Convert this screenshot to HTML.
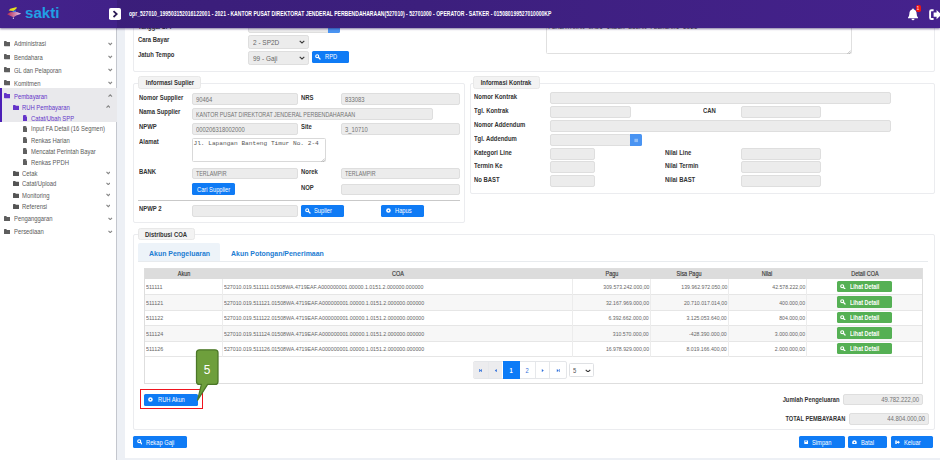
<!DOCTYPE html>
<html><head><meta charset="utf-8"><title>SAKTI</title>
<style>html,body{margin:0;padding:0;background:#edf0f5;overflow:hidden;}body{width:940px;height:460px;position:relative;overflow:hidden;font-family:"Liberation Sans",sans-serif;}</style></head>
<body>
<div style="position:absolute;left:0px;top:0px;width:940px;height:460px;background:#edf0f5;"></div>
<div style="position:absolute;left:124.8px;top:27px;width:815.2px;height:431.2px;background:#fff;"></div>
<div style="position:absolute;left:0px;top:27px;width:117.3px;height:433px;background:#fff;border-right:0.6px solid #c4c7ce;box-sizing:border-box;"></div>
<div style="position:absolute;left:0px;top:87.9px;width:117px;height:34.6px;background:#e9e9ec;"></div>
<div style="position:absolute;left:0px;top:87.9px;width:1.9px;height:34.6px;background:#4c1fb6;"></div>
<svg style="position:absolute;left:4.2px;top:41.35px;" width="6.3" height="5.29" viewBox="0 0 10 7.2" preserveAspectRatio="none"><path d="M0 1Q0 0 1 0H3.6L4.6 1.2H9Q10 1.2 10 2.2V6.2Q10 7.2 9 7.2H1Q0 7.2 0 6.2Z" fill="#5e5e5e"/></svg>
<div style="position:absolute;top:41.48px;font:normal 6.8px/1 'Liberation Sans',sans-serif;color:#5a5a5a;white-space:nowrap;left:13.5px;transform:scaleX(0.865);transform-origin:0 50%;">Administrasi</div>
<svg style="position:absolute;left:108px;top:42.25px;" width="4.5" height="3.5" viewBox="0 0 4.5 3.5" preserveAspectRatio="none"><path d="M0.5 0.9L2.25 2.6L4 0.9" fill="none" stroke="#858585" stroke-width="1.15"/></svg>
<svg style="position:absolute;left:4.2px;top:54.45px;" width="6.3" height="5.29" viewBox="0 0 10 7.2" preserveAspectRatio="none"><path d="M0 1Q0 0 1 0H3.6L4.6 1.2H9Q10 1.2 10 2.2V6.2Q10 7.2 9 7.2H1Q0 7.2 0 6.2Z" fill="#5e5e5e"/></svg>
<div style="position:absolute;top:54.58px;font:normal 6.8px/1 'Liberation Sans',sans-serif;color:#5a5a5a;white-space:nowrap;left:13.5px;transform:scaleX(0.865);transform-origin:0 50%;">Bendahara</div>
<svg style="position:absolute;left:108px;top:55.35px;" width="4.5" height="3.5" viewBox="0 0 4.5 3.5" preserveAspectRatio="none"><path d="M0.5 0.9L2.25 2.6L4 0.9" fill="none" stroke="#858585" stroke-width="1.15"/></svg>
<svg style="position:absolute;left:4.2px;top:67.45px;" width="6.3" height="5.29" viewBox="0 0 10 7.2" preserveAspectRatio="none"><path d="M0 1Q0 0 1 0H3.6L4.6 1.2H9Q10 1.2 10 2.2V6.2Q10 7.2 9 7.2H1Q0 7.2 0 6.2Z" fill="#5e5e5e"/></svg>
<div style="position:absolute;top:67.58px;font:normal 6.8px/1 'Liberation Sans',sans-serif;color:#5a5a5a;white-space:nowrap;left:13.5px;transform:scaleX(0.865);transform-origin:0 50%;">GL dan Pelaporan</div>
<svg style="position:absolute;left:108px;top:68.35px;" width="4.5" height="3.5" viewBox="0 0 4.5 3.5" preserveAspectRatio="none"><path d="M0.5 0.9L2.25 2.6L4 0.9" fill="none" stroke="#858585" stroke-width="1.15"/></svg>
<svg style="position:absolute;left:4.2px;top:80.45px;" width="6.3" height="5.29" viewBox="0 0 10 7.2" preserveAspectRatio="none"><path d="M0 1Q0 0 1 0H3.6L4.6 1.2H9Q10 1.2 10 2.2V6.2Q10 7.2 9 7.2H1Q0 7.2 0 6.2Z" fill="#5e5e5e"/></svg>
<div style="position:absolute;top:80.58px;font:normal 6.8px/1 'Liberation Sans',sans-serif;color:#5a5a5a;white-space:nowrap;left:13.5px;transform:scaleX(0.865);transform-origin:0 50%;">Komitmen</div>
<svg style="position:absolute;left:108px;top:81.35px;" width="4.5" height="3.5" viewBox="0 0 4.5 3.5" preserveAspectRatio="none"><path d="M0.5 0.9L2.25 2.6L4 0.9" fill="none" stroke="#858585" stroke-width="1.15"/></svg>
<svg style="position:absolute;left:4.2px;top:93.45px;" width="6.3" height="5.29" viewBox="0 0 10 7.2" preserveAspectRatio="none"><path d="M0 1Q0 0 1 0H3.6L4.6 1.2H9Q10 1.2 10 2.2V6.2Q10 7.2 9 7.2H1Q0 7.2 0 6.2Z" fill="#6434c9"/></svg>
<div style="position:absolute;top:93.58px;font:normal 6.8px/1 'Liberation Sans',sans-serif;color:#6434c9;white-space:nowrap;left:13.5px;transform:scaleX(0.865);transform-origin:0 50%;">Pembayaran</div>
<svg style="position:absolute;left:108px;top:94.35px;" width="4.5" height="3.5" viewBox="0 0 4.5 3.5" preserveAspectRatio="none"><path d="M0.5 2.6L2.25 0.9L4 2.6" fill="none" stroke="#858585" stroke-width="1.15"/></svg>
<svg style="position:absolute;left:13px;top:104.5px;" width="6.2" height="5.21" viewBox="0 0 10 7.2" preserveAspectRatio="none"><path d="M0 1Q0 0 1 0H3.6L4.6 1.2H9Q10 1.2 10 2.2V6.2Q10 7.2 9 7.2H1Q0 7.2 0 6.2Z" fill="#6434c9"/></svg>
<div style="position:absolute;top:104.58px;font:normal 6.8px/1 'Liberation Sans',sans-serif;color:#6434c9;white-space:nowrap;left:22px;transform:scaleX(0.865);transform-origin:0 50%;">RUH Pembayaran</div>
<svg style="position:absolute;left:105.5px;top:105.35px;" width="4.5" height="3.5" viewBox="0 0 4.5 3.5" preserveAspectRatio="none"><path d="M0.5 2.6L2.25 0.9L4 2.6" fill="none" stroke="#858585" stroke-width="1.15"/></svg>
<svg style="position:absolute;left:22.6px;top:114.8px;" width="4.6" height="6.2" viewBox="0 0 3.9 5.2" preserveAspectRatio="none"><path d="M0 0.4Q0 0 0.4 0H2.4L3.9 1.5V4.8Q3.9 5.2 3.5 5.2H0.4Q0 5.2 0 4.8Z" fill="#6434c9"/><path d="M2.4 0V1.5H3.9" fill="#fff" opacity=".5"/></svg>
<div style="position:absolute;top:115.58px;font:normal 6.8px/1 'Liberation Sans',sans-serif;color:#6434c9;white-space:nowrap;left:31px;transform:scaleX(0.865);transform-origin:0 50%;">Catat/Ubah SPP</div>
<svg style="position:absolute;left:22.6px;top:125.7px;" width="4.6" height="6.2" viewBox="0 0 3.9 5.2" preserveAspectRatio="none"><path d="M0 0.4Q0 0 0.4 0H2.4L3.9 1.5V4.8Q3.9 5.2 3.5 5.2H0.4Q0 5.2 0 4.8Z" fill="#606060"/><path d="M2.4 0V1.5H3.9" fill="#fff" opacity=".5"/></svg>
<div style="position:absolute;top:126.18px;font:normal 6.8px/1 'Liberation Sans',sans-serif;color:#5a5a5a;white-space:nowrap;left:31px;transform:scaleX(0.865);transform-origin:0 50%;">Input FA Detail (16 Segmen)</div>
<svg style="position:absolute;left:22.6px;top:137.1px;" width="4.6" height="6.2" viewBox="0 0 3.9 5.2" preserveAspectRatio="none"><path d="M0 0.4Q0 0 0.4 0H2.4L3.9 1.5V4.8Q3.9 5.2 3.5 5.2H0.4Q0 5.2 0 4.8Z" fill="#606060"/><path d="M2.4 0V1.5H3.9" fill="#fff" opacity=".5"/></svg>
<div style="position:absolute;top:137.58px;font:normal 6.8px/1 'Liberation Sans',sans-serif;color:#5a5a5a;white-space:nowrap;left:31px;transform:scaleX(0.865);transform-origin:0 50%;">Renkas Harian</div>
<svg style="position:absolute;left:22.6px;top:148.1px;" width="4.6" height="6.2" viewBox="0 0 3.9 5.2" preserveAspectRatio="none"><path d="M0 0.4Q0 0 0.4 0H2.4L3.9 1.5V4.8Q3.9 5.2 3.5 5.2H0.4Q0 5.2 0 4.8Z" fill="#606060"/><path d="M2.4 0V1.5H3.9" fill="#fff" opacity=".5"/></svg>
<div style="position:absolute;top:148.58px;font:normal 6.8px/1 'Liberation Sans',sans-serif;color:#5a5a5a;white-space:nowrap;left:31px;transform:scaleX(0.865);transform-origin:0 50%;">Mencatat Perintah Bayar</div>
<svg style="position:absolute;left:22.6px;top:159.1px;" width="4.6" height="6.2" viewBox="0 0 3.9 5.2" preserveAspectRatio="none"><path d="M0 0.4Q0 0 0.4 0H2.4L3.9 1.5V4.8Q3.9 5.2 3.5 5.2H0.4Q0 5.2 0 4.8Z" fill="#606060"/><path d="M2.4 0V1.5H3.9" fill="#fff" opacity=".5"/></svg>
<div style="position:absolute;top:159.58px;font:normal 6.8px/1 'Liberation Sans',sans-serif;color:#5a5a5a;white-space:nowrap;left:31px;transform:scaleX(0.865);transform-origin:0 50%;">Renkas PPDH</div>
<svg style="position:absolute;left:13px;top:170.5px;" width="6.2" height="5.21" viewBox="0 0 10 7.2" preserveAspectRatio="none"><path d="M0 1Q0 0 1 0H3.6L4.6 1.2H9Q10 1.2 10 2.2V6.2Q10 7.2 9 7.2H1Q0 7.2 0 6.2Z" fill="#555"/></svg>
<div style="position:absolute;top:170.58px;font:normal 6.8px/1 'Liberation Sans',sans-serif;color:#5a5a5a;white-space:nowrap;left:22px;transform:scaleX(0.865);transform-origin:0 50%;">Cetak</div>
<svg style="position:absolute;left:105.5px;top:171.35px;" width="4.5" height="3.5" viewBox="0 0 4.5 3.5" preserveAspectRatio="none"><path d="M0.5 0.9L2.25 2.6L4 0.9" fill="none" stroke="#858585" stroke-width="1.15"/></svg>
<svg style="position:absolute;left:13px;top:181.1px;" width="6.2" height="5.21" viewBox="0 0 10 7.2" preserveAspectRatio="none"><path d="M0 1Q0 0 1 0H3.6L4.6 1.2H9Q10 1.2 10 2.2V6.2Q10 7.2 9 7.2H1Q0 7.2 0 6.2Z" fill="#555"/></svg>
<div style="position:absolute;top:181.18px;font:normal 6.8px/1 'Liberation Sans',sans-serif;color:#5a5a5a;white-space:nowrap;left:22px;transform:scaleX(0.865);transform-origin:0 50%;">Catat/Upload</div>
<svg style="position:absolute;left:105.5px;top:181.95px;" width="4.5" height="3.5" viewBox="0 0 4.5 3.5" preserveAspectRatio="none"><path d="M0.5 0.9L2.25 2.6L4 0.9" fill="none" stroke="#858585" stroke-width="1.15"/></svg>
<svg style="position:absolute;left:13px;top:192.5px;" width="6.2" height="5.21" viewBox="0 0 10 7.2" preserveAspectRatio="none"><path d="M0 1Q0 0 1 0H3.6L4.6 1.2H9Q10 1.2 10 2.2V6.2Q10 7.2 9 7.2H1Q0 7.2 0 6.2Z" fill="#555"/></svg>
<div style="position:absolute;top:192.58px;font:normal 6.8px/1 'Liberation Sans',sans-serif;color:#5a5a5a;white-space:nowrap;left:22px;transform:scaleX(0.865);transform-origin:0 50%;">Monitoring</div>
<svg style="position:absolute;left:105.5px;top:193.35px;" width="4.5" height="3.5" viewBox="0 0 4.5 3.5" preserveAspectRatio="none"><path d="M0.5 0.9L2.25 2.6L4 0.9" fill="none" stroke="#858585" stroke-width="1.15"/></svg>
<svg style="position:absolute;left:13px;top:203.5px;" width="6.2" height="5.21" viewBox="0 0 10 7.2" preserveAspectRatio="none"><path d="M0 1Q0 0 1 0H3.6L4.6 1.2H9Q10 1.2 10 2.2V6.2Q10 7.2 9 7.2H1Q0 7.2 0 6.2Z" fill="#555"/></svg>
<div style="position:absolute;top:203.58px;font:normal 6.8px/1 'Liberation Sans',sans-serif;color:#5a5a5a;white-space:nowrap;left:22px;transform:scaleX(0.865);transform-origin:0 50%;">Referensi</div>
<svg style="position:absolute;left:105.5px;top:204.35px;" width="4.5" height="3.5" viewBox="0 0 4.5 3.5" preserveAspectRatio="none"><path d="M0.5 0.9L2.25 2.6L4 0.9" fill="none" stroke="#858585" stroke-width="1.15"/></svg>
<svg style="position:absolute;left:4.2px;top:216.05px;" width="6.3" height="5.29" viewBox="0 0 10 7.2" preserveAspectRatio="none"><path d="M0 1Q0 0 1 0H3.6L4.6 1.2H9Q10 1.2 10 2.2V6.2Q10 7.2 9 7.2H1Q0 7.2 0 6.2Z" fill="#5e5e5e"/></svg>
<div style="position:absolute;top:216.18px;font:normal 6.8px/1 'Liberation Sans',sans-serif;color:#5a5a5a;white-space:nowrap;left:13.5px;transform:scaleX(0.865);transform-origin:0 50%;">Penganggaran</div>
<svg style="position:absolute;left:108px;top:216.95px;" width="4.5" height="3.5" viewBox="0 0 4.5 3.5" preserveAspectRatio="none"><path d="M0.5 0.9L2.25 2.6L4 0.9" fill="none" stroke="#858585" stroke-width="1.15"/></svg>
<svg style="position:absolute;left:4.2px;top:229.05px;" width="6.3" height="5.29" viewBox="0 0 10 7.2" preserveAspectRatio="none"><path d="M0 1Q0 0 1 0H3.6L4.6 1.2H9Q10 1.2 10 2.2V6.2Q10 7.2 9 7.2H1Q0 7.2 0 6.2Z" fill="#5e5e5e"/></svg>
<div style="position:absolute;top:229.18px;font:normal 6.8px/1 'Liberation Sans',sans-serif;color:#5a5a5a;white-space:nowrap;left:13.5px;transform:scaleX(0.865);transform-origin:0 50%;">Persediaan</div>
<svg style="position:absolute;left:108px;top:229.95px;" width="4.5" height="3.5" viewBox="0 0 4.5 3.5" preserveAspectRatio="none"><path d="M0.5 0.9L2.25 2.6L4 0.9" fill="none" stroke="#858585" stroke-width="1.15"/></svg>
<div style="position:absolute;left:133px;top:20px;width:801.5px;height:52.2px;border:1px solid #ebecef;border-radius:2px;box-sizing:border-box;"></div>
<div style="position:absolute;top:23.53px;font:bold 6.8px/1 'Liberation Sans',sans-serif;color:#333;white-space:nowrap;left:138px;transform:scaleX(0.87);transform-origin:0 50%;">Tanggal SPP</div>
<div style="position:absolute;left:248.4px;top:20px;width:80.6px;height:13.2px;background:#ececec;border:1px solid #dedede;border-radius:2.1px;box-sizing:border-box;"></div>
<div style="position:absolute;left:328.3px;top:20px;width:11.7px;height:12.8px;background:#4a94f2;border-radius:0 1.5px 1.5px 0;"></div>
<div style="position:absolute;top:36.93px;font:bold 6.8px/1 'Liberation Sans',sans-serif;color:#333;white-space:nowrap;left:138px;transform:scaleX(0.87);transform-origin:0 50%;">Cara Bayar</div>
<div style="position:absolute;top:52.43px;font:bold 6.8px/1 'Liberation Sans',sans-serif;color:#333;white-space:nowrap;left:138px;transform:scaleX(0.87);transform-origin:0 50%;">Jatuh Tempo</div>
<div style="position:absolute;left:248.4px;top:35.2px;width:60.6px;height:13.7px;background:#ececec;border:1px solid #dedede;border-radius:2.2px;box-sizing:border-box;"></div>
<div style="position:absolute;top:39.2px;font:normal 7.6px/1 'Liberation Sans',sans-serif;color:#666;white-space:nowrap;left:252.5px;transform:scaleX(0.853);transform-origin:0 50%;">2 - SP2D</div>
<svg style="position:absolute;left:299px;top:40.4px;" width="6" height="3.8" viewBox="0 0 6 3.8" preserveAspectRatio="none"><path d="M0.7 0.8L3 3L5.3 0.8" fill="none" stroke="#3a3a3a" stroke-width="1.1"/></svg>
<div style="position:absolute;left:248.4px;top:50.9px;width:60.6px;height:14.0px;background:#ececec;border:1px solid #dedede;border-radius:2.2px;box-sizing:border-box;"></div>
<div style="position:absolute;top:55.2px;font:normal 7.6px/1 'Liberation Sans',sans-serif;color:#666;white-space:nowrap;left:252.5px;transform:scaleX(0.853);transform-origin:0 50%;">99 - Gaji</div>
<svg style="position:absolute;left:299px;top:56.4px;" width="6" height="3.8" viewBox="0 0 6 3.8" preserveAspectRatio="none"><path d="M0.7 0.8L3 3L5.3 0.8" fill="none" stroke="#3a3a3a" stroke-width="1.1"/></svg>
<div style="position:absolute;left:311.5px;top:50.8px;width:37.5px;height:12.1px;background:#0f7bf5;border-radius:1.5px;"></div>
<div style="position:absolute;top:54.49px;font:normal 6.6px/1 'Liberation Sans',sans-serif;color:#fff;white-space:nowrap;left:324.8px;transform:scaleX(0.87);transform-origin:0 50%;">RPD</div>
<svg style="position:absolute;left:315.3px;top:54.099999999999994px;" width="5.5" height="5.5" viewBox="0 0 5 5" preserveAspectRatio="none"><circle cx="2" cy="2" r="1.35" fill="none" stroke="#fff" stroke-width="1.05"/><path d="M3 3L4.6 4.6" stroke="#fff" stroke-width="1.15" stroke-linecap="round"/></svg>
<div style="position:absolute;top:23.23px;font:bold 6.8px/1 'Liberation Sans',sans-serif;color:#333;white-space:nowrap;left:507px;transform:scaleX(0.87);transform-origin:0 50%;">Uraian</div>
<div style="position:absolute;left:546px;top:20px;width:305.5px;height:34px;background:#fff;border:1px solid #e0e0e0;border-radius:1.5px;box-sizing:border-box;"></div>
<div style="position:absolute;top:25.42px;font:normal 6.07px/1 'Liberation Mono',sans-serif;color:#444;white-space:nowrap;left:548.3px;transform:scaleX(1);transform-origin:0 50%;">PEMBAYARAN GAJI INDUK BULAN FEBRUARI 2021</div>
<svg style="position:absolute;left:847px;top:49.5px;" width="4" height="4" viewBox="0 0 4 4" preserveAspectRatio="none"><path d="M0.5 3.8L3.8 0.5M2.2 3.8L3.8 2.2" stroke="#888" stroke-width="0.5"/></svg>
<div style="position:absolute;left:133px;top:82.5px;width:331.5px;height:140.5px;border:1px solid #ebecef;border-radius:2px;box-sizing:border-box;"></div>
<div style="position:absolute;left:137.7px;top:76.3px;width:63.6px;height:12.9px;background:#f3f3f3;border:1px solid #e8e8e8;border-radius:2.5px;box-sizing:border-box;"></div>
<div style="position:absolute;top:80.48px;font:bold 6.8px/1 'Liberation Sans',sans-serif;color:#333;white-space:nowrap;left:169.5px;transform:translateX(-50%) scaleX(0.87);transform-origin:50% 50%;">Informasi Suplier</div>
<div style="position:absolute;top:95.23px;font:bold 6.8px/1 'Liberation Sans',sans-serif;color:#333;white-space:nowrap;left:138.5px;transform:scaleX(0.87);transform-origin:0 50%;">Nomor Supplier</div>
<div style="position:absolute;left:192px;top:93.4px;width:105.5px;height:11.6px;background:#ececec;border:1px solid #dedede;border-radius:2.1px;box-sizing:border-box;"></div>
<div style="position:absolute;top:96.99px;font:normal 6.5px/1 'Liberation Sans',sans-serif;color:#737373;white-space:nowrap;left:196.3px;transform:scaleX(0.9);transform-origin:0 50%;">90464</div>
<div style="position:absolute;top:94.93px;font:bold 6.8px/1 'Liberation Sans',sans-serif;color:#333;white-space:nowrap;left:300.5px;transform:scaleX(0.87);transform-origin:0 50%;">NRS</div>
<div style="position:absolute;left:341px;top:93.4px;width:118.5px;height:11.6px;background:#ececec;border:1px solid #dedede;border-radius:2.1px;box-sizing:border-box;"></div>
<div style="position:absolute;top:96.99px;font:normal 6.5px/1 'Liberation Sans',sans-serif;color:#737373;white-space:nowrap;left:345.3px;transform:scaleX(0.9);transform-origin:0 50%;">833083</div>
<div style="position:absolute;top:109.43px;font:bold 6.8px/1 'Liberation Sans',sans-serif;color:#333;white-space:nowrap;left:138.5px;transform:scaleX(0.87);transform-origin:0 50%;">Nama Supplier</div>
<div style="position:absolute;left:192px;top:108px;width:240.5px;height:11.7px;background:#ececec;border:1px solid #dedede;border-radius:2.1px;box-sizing:border-box;"></div>
<div style="position:absolute;top:111.64px;font:normal 6.5px/1 'Liberation Sans',sans-serif;color:#737373;white-space:nowrap;left:196.3px;transform:scaleX(0.825);transform-origin:0 50%;">KANTOR PUSAT DIREKTORAT JENDERAL PERBENDAHARAAN</div>
<div style="position:absolute;top:124.43px;font:bold 6.8px/1 'Liberation Sans',sans-serif;color:#333;white-space:nowrap;left:138.5px;transform:scaleX(0.87);transform-origin:0 50%;">NPWP</div>
<div style="position:absolute;left:192px;top:123px;width:105.5px;height:11.6px;background:#ececec;border:1px solid #dedede;border-radius:2.1px;box-sizing:border-box;"></div>
<div style="position:absolute;top:126.59px;font:normal 6.5px/1 'Liberation Sans',sans-serif;color:#737373;white-space:nowrap;left:196.3px;transform:scaleX(0.9);transform-origin:0 50%;">000206318002000</div>
<div style="position:absolute;top:124.43px;font:bold 6.8px/1 'Liberation Sans',sans-serif;color:#333;white-space:nowrap;left:300.5px;transform:scaleX(0.87);transform-origin:0 50%;">Site</div>
<div style="position:absolute;left:341px;top:123px;width:118.5px;height:11.6px;background:#ececec;border:1px solid #dedede;border-radius:2.1px;box-sizing:border-box;"></div>
<div style="position:absolute;top:126.59px;font:normal 6.5px/1 'Liberation Sans',sans-serif;color:#737373;white-space:nowrap;left:345.3px;transform:scaleX(0.9);transform-origin:0 50%;">3_10710</div>
<div style="position:absolute;top:138.63px;font:bold 6.8px/1 'Liberation Sans',sans-serif;color:#333;white-space:nowrap;left:138.5px;transform:scaleX(0.87);transform-origin:0 50%;">Alamat</div>
<div style="position:absolute;left:192px;top:137.5px;width:133.5px;height:24.5px;background:#fff;border:1px solid #d9d9d9;border-radius:1.5px;box-sizing:border-box;"></div>
<div style="position:absolute;top:140.98px;font:normal 6.15px/1 'Liberation Mono',sans-serif;color:#555;white-space:nowrap;left:193.5px;transform:scaleX(1);transform-origin:0 50%;">Jl. Lapangan Banteng Timur No. 2-4</div>
<svg style="position:absolute;left:321px;top:157.5px;" width="4" height="4" viewBox="0 0 4 4" preserveAspectRatio="none"><path d="M0.5 3.8L3.8 0.5M2.2 3.8L3.8 2.2" stroke="#888" stroke-width="0.5"/></svg>
<div style="position:absolute;top:169.43px;font:bold 6.8px/1 'Liberation Sans',sans-serif;color:#333;white-space:nowrap;left:138.5px;transform:scaleX(0.87);transform-origin:0 50%;">BANK</div>
<div style="position:absolute;left:192px;top:167.5px;width:105.5px;height:11.8px;background:#ececec;border:1px solid #dedede;border-radius:2.1px;box-sizing:border-box;"></div>
<div style="position:absolute;top:171.19px;font:normal 6.5px/1 'Liberation Sans',sans-serif;color:#737373;white-space:nowrap;left:196.3px;transform:scaleX(0.825);transform-origin:0 50%;">TERLAMPIR</div>
<div style="position:absolute;top:169.43px;font:bold 6.8px/1 'Liberation Sans',sans-serif;color:#333;white-space:nowrap;left:300.5px;transform:scaleX(0.87);transform-origin:0 50%;">Norek</div>
<div style="position:absolute;left:341px;top:167.5px;width:118.5px;height:11.8px;background:#ececec;border:1px solid #dedede;border-radius:2.1px;box-sizing:border-box;"></div>
<div style="position:absolute;top:171.19px;font:normal 6.5px/1 'Liberation Sans',sans-serif;color:#737373;white-space:nowrap;left:345.3px;transform:scaleX(0.825);transform-origin:0 50%;">TERLAMPIR</div>
<div style="position:absolute;left:192px;top:183px;width:42.5px;height:12px;background:#0f7bf5;border-radius:1.5px;"></div>
<div style="position:absolute;top:186.64px;font:normal 6.6px/1 'Liberation Sans',sans-serif;color:#fff;white-space:nowrap;left:196.7px;transform:scaleX(0.87);transform-origin:0 50%;">Cari Supplier</div>
<div style="position:absolute;top:185.03px;font:bold 6.8px/1 'Liberation Sans',sans-serif;color:#333;white-space:nowrap;left:300.5px;transform:scaleX(0.87);transform-origin:0 50%;">NOP</div>
<div style="position:absolute;left:341px;top:183.5px;width:118.5px;height:11.5px;background:#ececec;border:1px solid #dedede;border-radius:2.1px;box-sizing:border-box;"></div>
<div style="position:absolute;left:138px;top:200.2px;width:321.5px;height:0.7px;background:#c9c9c9;"></div>
<div style="position:absolute;top:206.43px;font:bold 6.8px/1 'Liberation Sans',sans-serif;color:#333;white-space:nowrap;left:138.5px;transform:scaleX(0.87);transform-origin:0 50%;">NPWP 2</div>
<div style="position:absolute;left:192px;top:205px;width:105.5px;height:11.7px;background:#ececec;border:1px solid #dedede;border-radius:2.1px;box-sizing:border-box;"></div>
<div style="position:absolute;left:300.5px;top:205px;width:43.5px;height:11.5px;background:#0f7bf5;border-radius:1.5px;"></div>
<div style="position:absolute;top:208.39px;font:normal 6.6px/1 'Liberation Sans',sans-serif;color:#fff;white-space:nowrap;left:313.5px;transform:scaleX(0.87);transform-origin:0 50%;">Suplier</div>
<svg style="position:absolute;left:305px;top:208.0px;" width="5.5" height="5.5" viewBox="0 0 5 5" preserveAspectRatio="none"><circle cx="2" cy="2" r="1.35" fill="none" stroke="#fff" stroke-width="1.05"/><path d="M3 3L4.6 4.6" stroke="#fff" stroke-width="1.15" stroke-linecap="round"/></svg>
<div style="position:absolute;left:381px;top:205px;width:43px;height:11.5px;background:#0f7bf5;border-radius:1.5px;"></div>
<div style="position:absolute;top:208.39px;font:normal 6.6px/1 'Liberation Sans',sans-serif;color:#fff;white-space:nowrap;left:394.5px;transform:scaleX(0.87);transform-origin:0 50%;">Hapus</div>
<svg style="position:absolute;left:385.8px;top:208.3px;" width="4.9" height="4.9" viewBox="0 0 4.9 4.9" preserveAspectRatio="none"><circle cx="2.45" cy="2.45" r="2.3" fill="#fff"/><circle cx="2.45" cy="2.45" r="0.75" fill="#0f7bf5"/></svg>
<div style="position:absolute;left:470px;top:82.5px;width:464.5px;height:111.5px;border:1px solid #ebecef;border-radius:2px;box-sizing:border-box;"></div>
<div style="position:absolute;left:473px;top:76.3px;width:66.6px;height:12.9px;background:#f3f3f3;border:1px solid #e8e8e8;border-radius:2.5px;box-sizing:border-box;"></div>
<div style="position:absolute;top:80.48px;font:bold 6.8px/1 'Liberation Sans',sans-serif;color:#333;white-space:nowrap;left:506.3px;transform:translateX(-50%) scaleX(0.87);transform-origin:50% 50%;">Informasi Kontrak</div>
<div style="position:absolute;top:94.43px;font:bold 6.8px/1 'Liberation Sans',sans-serif;color:#333;white-space:nowrap;left:473.6px;transform:scaleX(0.87);transform-origin:0 50%;">Nomor Kontrak</div>
<div style="position:absolute;left:550px;top:92.4px;width:340.5px;height:11.6px;background:#ececec;border:1px solid #dedede;border-radius:2.1px;box-sizing:border-box;"></div>
<div style="position:absolute;top:108.03px;font:bold 6.8px/1 'Liberation Sans',sans-serif;color:#333;white-space:nowrap;left:473.6px;transform:scaleX(0.87);transform-origin:0 50%;">Tgl. Kontrak</div>
<div style="position:absolute;left:550px;top:106.4px;width:80.5px;height:11.6px;background:#ececec;border:1px solid #dedede;border-radius:2.1px;box-sizing:border-box;"></div>
<div style="position:absolute;top:108.03px;font:bold 6.8px/1 'Liberation Sans',sans-serif;color:#333;white-space:nowrap;left:703px;transform:scaleX(0.87);transform-origin:0 50%;">CAN</div>
<div style="position:absolute;left:741px;top:106.4px;width:80.3px;height:11.6px;background:#ececec;border:1px solid #dedede;border-radius:2.1px;box-sizing:border-box;"></div>
<div style="position:absolute;top:122.43px;font:bold 6.8px/1 'Liberation Sans',sans-serif;color:#333;white-space:nowrap;left:473.6px;transform:scaleX(0.87);transform-origin:0 50%;">Nomor Addendum</div>
<div style="position:absolute;left:550px;top:120.4px;width:340.5px;height:11.6px;background:#ececec;border:1px solid #dedede;border-radius:2.1px;box-sizing:border-box;"></div>
<div style="position:absolute;top:136.13px;font:bold 6.8px/1 'Liberation Sans',sans-serif;color:#333;white-space:nowrap;left:473.6px;transform:scaleX(0.87);transform-origin:0 50%;">Tgl. Addendum</div>
<div style="position:absolute;left:550px;top:134.4px;width:80.5px;height:11.3px;background:#ececec;border:1px solid #dedede;border-radius:2.1px;box-sizing:border-box;"></div>
<div style="position:absolute;left:630px;top:134.4px;width:11.5px;height:11.3px;background:#4a94f2;border-radius:0 1.5px 1.5px 0;"></div>
<svg style="position:absolute;left:633.5px;top:138px;" width="4.5" height="4.5" viewBox="0 0 4.5 4.5" preserveAspectRatio="none"><rect x="0.4" y="0.8" width="3.7" height="3.3" fill="#8fbdf7"/></svg>
<div style="position:absolute;top:150.03px;font:bold 6.8px/1 'Liberation Sans',sans-serif;color:#333;white-space:nowrap;left:473.6px;transform:scaleX(0.87);transform-origin:0 50%;">Kategori Line</div>
<div style="position:absolute;left:550px;top:148px;width:44.5px;height:11.7px;background:#ececec;border:1px solid #dedede;border-radius:2.1px;box-sizing:border-box;"></div>
<div style="position:absolute;top:150.03px;font:bold 6.8px/1 'Liberation Sans',sans-serif;color:#333;white-space:nowrap;left:664.5px;transform:scaleX(0.87);transform-origin:0 50%;">Nilai Line</div>
<div style="position:absolute;left:741px;top:148px;width:80.3px;height:11.7px;background:#ececec;border:1px solid #dedede;border-radius:2.1px;box-sizing:border-box;"></div>
<div style="position:absolute;top:163.23px;font:bold 6.8px/1 'Liberation Sans',sans-serif;color:#333;white-space:nowrap;left:473.6px;transform:scaleX(0.87);transform-origin:0 50%;">Termin Ke</div>
<div style="position:absolute;left:550px;top:161.4px;width:44.5px;height:11.8px;background:#ececec;border:1px solid #dedede;border-radius:2.1px;box-sizing:border-box;"></div>
<div style="position:absolute;top:163.23px;font:bold 6.8px/1 'Liberation Sans',sans-serif;color:#333;white-space:nowrap;left:664.5px;transform:scaleX(0.87);transform-origin:0 50%;">Nilai Termin</div>
<div style="position:absolute;left:741px;top:161.4px;width:80.3px;height:11.8px;background:#ececec;border:1px solid #dedede;border-radius:2.1px;box-sizing:border-box;"></div>
<div style="position:absolute;top:176.93px;font:bold 6.8px/1 'Liberation Sans',sans-serif;color:#333;white-space:nowrap;left:473.6px;transform:scaleX(0.87);transform-origin:0 50%;">No BAST</div>
<div style="position:absolute;left:550px;top:175px;width:44.5px;height:12px;background:#ececec;border:1px solid #dedede;border-radius:2.1px;box-sizing:border-box;"></div>
<div style="position:absolute;top:176.93px;font:bold 6.8px/1 'Liberation Sans',sans-serif;color:#333;white-space:nowrap;left:664.5px;transform:scaleX(0.87);transform-origin:0 50%;">Nilai BAST</div>
<div style="position:absolute;left:741px;top:175px;width:80.3px;height:12px;background:#ececec;border:1px solid #dedede;border-radius:2.1px;box-sizing:border-box;"></div>
<div style="position:absolute;left:133px;top:234px;width:801.5px;height:196px;border:1px solid #ebecef;border-radius:2px;box-sizing:border-box;"></div>
<div style="position:absolute;left:137.8px;top:228px;width:56.8px;height:12.2px;background:#f3f3f3;border:1px solid #e8e8e8;border-radius:2.5px;box-sizing:border-box;"></div>
<div style="position:absolute;top:231.83px;font:bold 6.8px/1 'Liberation Sans',sans-serif;color:#333;white-space:nowrap;left:166.2px;transform:translateX(-50%) scaleX(0.87);transform-origin:50% 50%;">Distribusi COA</div>
<div style="position:absolute;left:138px;top:243px;width:81.5px;height:18px;background:#edf3f9;border-radius:2px 2px 0 0;"></div>
<div style="position:absolute;left:138px;top:260.8px;width:790px;height:0.6px;background:#e8ebee;"></div>
<div style="position:absolute;top:249.68px;font:bold 8px/1 'Liberation Sans',sans-serif;color:#1c7cd2;white-space:nowrap;left:149px;transform:scaleX(0.87);transform-origin:0 50%;">Akun Pengeluaran</div>
<div style="position:absolute;top:249.68px;font:bold 8px/1 'Liberation Sans',sans-serif;color:#1c7cd2;white-space:nowrap;left:230.5px;transform:scaleX(0.87);transform-origin:0 50%;">Akun Potongan/Penerimaan</div>
<div style="position:absolute;left:144px;top:267.5px;width:778.5px;height:11.5px;background:#dcdcdc;"></div>
<div style="position:absolute;top:271.0px;font:normal 6.3px/1 'Liberation Sans',sans-serif;color:#383838;white-space:nowrap;-webkit-text-stroke:0.15px #383838;left:183.5px;transform:translateX(-50%) scaleX(0.87);transform-origin:50% 50%;">Akun</div>
<div style="position:absolute;top:271.0px;font:normal 6.3px/1 'Liberation Sans',sans-serif;color:#383838;white-space:nowrap;-webkit-text-stroke:0.15px #383838;left:397.5px;transform:translateX(-50%) scaleX(0.87);transform-origin:50% 50%;">COA</div>
<div style="position:absolute;top:271.0px;font:normal 6.3px/1 'Liberation Sans',sans-serif;color:#383838;white-space:nowrap;-webkit-text-stroke:0.15px #383838;left:611.5px;transform:translateX(-50%) scaleX(0.87);transform-origin:50% 50%;">Pagu</div>
<div style="position:absolute;top:271.0px;font:normal 6.3px/1 'Liberation Sans',sans-serif;color:#383838;white-space:nowrap;-webkit-text-stroke:0.15px #383838;left:689.2px;transform:translateX(-50%) scaleX(0.87);transform-origin:50% 50%;">Sisa Pagu</div>
<div style="position:absolute;top:271.0px;font:normal 6.3px/1 'Liberation Sans',sans-serif;color:#383838;white-space:nowrap;-webkit-text-stroke:0.15px #383838;left:767px;transform:translateX(-50%) scaleX(0.87);transform-origin:50% 50%;">Nilai</div>
<div style="position:absolute;top:271.0px;font:normal 6.3px/1 'Liberation Sans',sans-serif;color:#383838;white-space:nowrap;-webkit-text-stroke:0.15px #383838;left:864.5px;transform:translateX(-50%) scaleX(0.87);transform-origin:50% 50%;">Detail COA</div>
<div style="position:absolute;left:144px;top:294.0px;width:778.5px;height:1.0px;background:#e6e6e6;"></div>
<div style="position:absolute;top:284.01px;font:normal 6.0px/1 'Liberation Sans',sans-serif;color:#666;white-space:nowrap;left:145.6px;transform:scaleX(0.9);transform-origin:0 50%;">511111</div>
<div style="position:absolute;top:284.01px;font:normal 6.0px/1 'Liberation Sans',sans-serif;color:#666;white-space:nowrap;left:224px;transform:scaleX(0.875);transform-origin:0 50%;">527010.019.511111.01508WA.4719EAF.A000000001.00000.1.0151.2.000000.000000</div>
<div style="position:absolute;top:284.01px;font:normal 6.0px/1 'Liberation Sans',sans-serif;color:#666;white-space:nowrap;right:290.8px;transform:scaleX(0.862);transform-origin:100% 50%;">309.573.242.000,00</div>
<div style="position:absolute;top:284.01px;font:normal 6.0px/1 'Liberation Sans',sans-serif;color:#666;white-space:nowrap;right:212.8px;transform:scaleX(0.862);transform-origin:100% 50%;">139.962.972.050,00</div>
<div style="position:absolute;top:284.01px;font:normal 6.0px/1 'Liberation Sans',sans-serif;color:#666;white-space:nowrap;right:134.8px;transform:scaleX(0.862);transform-origin:100% 50%;">42.578.222,00</div>
<div style="position:absolute;left:836.6px;top:280.7px;width:55.4px;height:11.6px;background:#55b054;border-radius:1.5px;"></div>
<svg style="position:absolute;left:840.4px;top:283.84999999999997px;" width="5.5" height="5.5" viewBox="0 0 5 5" preserveAspectRatio="none"><circle cx="2" cy="2" r="1.35" fill="none" stroke="#fff" stroke-width="1.05"/><path d="M3 3L4.6 4.6" stroke="#fff" stroke-width="1.15" stroke-linecap="round"/></svg>
<div style="position:absolute;top:284.24px;font:bold 6.6px/1 'Liberation Sans',sans-serif;color:#fff;white-space:nowrap;left:849.5px;transform:scaleX(0.823);transform-origin:0 50%;">Lihat Detail</div>
<div style="position:absolute;left:144px;top:294.5px;width:778.5px;height:15.5px;background:#f7f7f7;"></div>
<div style="position:absolute;left:144px;top:309.5px;width:778.5px;height:1.0px;background:#e6e6e6;"></div>
<div style="position:absolute;top:299.51px;font:normal 6.0px/1 'Liberation Sans',sans-serif;color:#666;white-space:nowrap;left:145.6px;transform:scaleX(0.9);transform-origin:0 50%;">511121</div>
<div style="position:absolute;top:299.51px;font:normal 6.0px/1 'Liberation Sans',sans-serif;color:#666;white-space:nowrap;left:224px;transform:scaleX(0.875);transform-origin:0 50%;">527010.019.511121.01508WA.4719EAF.A000000001.00000.1.0151.2.000000.000000</div>
<div style="position:absolute;top:299.51px;font:normal 6.0px/1 'Liberation Sans',sans-serif;color:#666;white-space:nowrap;right:290.8px;transform:scaleX(0.862);transform-origin:100% 50%;">32.167.969.000,00</div>
<div style="position:absolute;top:299.51px;font:normal 6.0px/1 'Liberation Sans',sans-serif;color:#666;white-space:nowrap;right:212.8px;transform:scaleX(0.862);transform-origin:100% 50%;">20.710.017.014,00</div>
<div style="position:absolute;top:299.51px;font:normal 6.0px/1 'Liberation Sans',sans-serif;color:#666;white-space:nowrap;right:134.8px;transform:scaleX(0.862);transform-origin:100% 50%;">400.000,00</div>
<div style="position:absolute;left:836.6px;top:296.2px;width:55.4px;height:11.6px;background:#55b054;border-radius:1.5px;"></div>
<svg style="position:absolute;left:840.4px;top:299.34999999999997px;" width="5.5" height="5.5" viewBox="0 0 5 5" preserveAspectRatio="none"><circle cx="2" cy="2" r="1.35" fill="none" stroke="#fff" stroke-width="1.05"/><path d="M3 3L4.6 4.6" stroke="#fff" stroke-width="1.15" stroke-linecap="round"/></svg>
<div style="position:absolute;top:299.74px;font:bold 6.6px/1 'Liberation Sans',sans-serif;color:#fff;white-space:nowrap;left:849.5px;transform:scaleX(0.823);transform-origin:0 50%;">Lihat Detail</div>
<div style="position:absolute;left:144px;top:325.0px;width:778.5px;height:1.0px;background:#e6e6e6;"></div>
<div style="position:absolute;top:315.01px;font:normal 6.0px/1 'Liberation Sans',sans-serif;color:#666;white-space:nowrap;left:145.6px;transform:scaleX(0.9);transform-origin:0 50%;">511122</div>
<div style="position:absolute;top:315.01px;font:normal 6.0px/1 'Liberation Sans',sans-serif;color:#666;white-space:nowrap;left:224px;transform:scaleX(0.875);transform-origin:0 50%;">527010.019.511122.01508WA.4719EAF.A000000001.00000.1.0151.2.000000.000000</div>
<div style="position:absolute;top:315.01px;font:normal 6.0px/1 'Liberation Sans',sans-serif;color:#666;white-space:nowrap;right:290.8px;transform:scaleX(0.862);transform-origin:100% 50%;">6.392.662.000,00</div>
<div style="position:absolute;top:315.01px;font:normal 6.0px/1 'Liberation Sans',sans-serif;color:#666;white-space:nowrap;right:212.8px;transform:scaleX(0.862);transform-origin:100% 50%;">3.125.053.640,00</div>
<div style="position:absolute;top:315.01px;font:normal 6.0px/1 'Liberation Sans',sans-serif;color:#666;white-space:nowrap;right:134.8px;transform:scaleX(0.862);transform-origin:100% 50%;">804.000,00</div>
<div style="position:absolute;left:836.6px;top:311.7px;width:55.4px;height:11.6px;background:#55b054;border-radius:1.5px;"></div>
<svg style="position:absolute;left:840.4px;top:314.84999999999997px;" width="5.5" height="5.5" viewBox="0 0 5 5" preserveAspectRatio="none"><circle cx="2" cy="2" r="1.35" fill="none" stroke="#fff" stroke-width="1.05"/><path d="M3 3L4.6 4.6" stroke="#fff" stroke-width="1.15" stroke-linecap="round"/></svg>
<div style="position:absolute;top:315.24px;font:bold 6.6px/1 'Liberation Sans',sans-serif;color:#fff;white-space:nowrap;left:849.5px;transform:scaleX(0.823);transform-origin:0 50%;">Lihat Detail</div>
<div style="position:absolute;left:144px;top:325.5px;width:778.5px;height:15.5px;background:#f7f7f7;"></div>
<div style="position:absolute;left:144px;top:340.5px;width:778.5px;height:1.0px;background:#e6e6e6;"></div>
<div style="position:absolute;top:330.51px;font:normal 6.0px/1 'Liberation Sans',sans-serif;color:#666;white-space:nowrap;left:145.6px;transform:scaleX(0.9);transform-origin:0 50%;">511124</div>
<div style="position:absolute;top:330.51px;font:normal 6.0px/1 'Liberation Sans',sans-serif;color:#666;white-space:nowrap;left:224px;transform:scaleX(0.875);transform-origin:0 50%;">527010.019.511124.01508WA.4719EAF.A000000001.00000.1.0151.2.000000.000000</div>
<div style="position:absolute;top:330.51px;font:normal 6.0px/1 'Liberation Sans',sans-serif;color:#666;white-space:nowrap;right:290.8px;transform:scaleX(0.862);transform-origin:100% 50%;">310.570.000,00</div>
<div style="position:absolute;top:330.51px;font:normal 6.0px/1 'Liberation Sans',sans-serif;color:#666;white-space:nowrap;right:212.8px;transform:scaleX(0.862);transform-origin:100% 50%;">-428.390.000,00</div>
<div style="position:absolute;top:330.51px;font:normal 6.0px/1 'Liberation Sans',sans-serif;color:#666;white-space:nowrap;right:134.8px;transform:scaleX(0.862);transform-origin:100% 50%;">3.000.000,00</div>
<div style="position:absolute;left:836.6px;top:327.2px;width:55.4px;height:11.6px;background:#55b054;border-radius:1.5px;"></div>
<svg style="position:absolute;left:840.4px;top:330.34999999999997px;" width="5.5" height="5.5" viewBox="0 0 5 5" preserveAspectRatio="none"><circle cx="2" cy="2" r="1.35" fill="none" stroke="#fff" stroke-width="1.05"/><path d="M3 3L4.6 4.6" stroke="#fff" stroke-width="1.15" stroke-linecap="round"/></svg>
<div style="position:absolute;top:330.74px;font:bold 6.6px/1 'Liberation Sans',sans-serif;color:#fff;white-space:nowrap;left:849.5px;transform:scaleX(0.823);transform-origin:0 50%;">Lihat Detail</div>
<div style="position:absolute;left:144px;top:356.0px;width:778.5px;height:1.0px;background:#e6e6e6;"></div>
<div style="position:absolute;top:346.01px;font:normal 6.0px/1 'Liberation Sans',sans-serif;color:#666;white-space:nowrap;left:145.6px;transform:scaleX(0.9);transform-origin:0 50%;">511126</div>
<div style="position:absolute;top:346.01px;font:normal 6.0px/1 'Liberation Sans',sans-serif;color:#666;white-space:nowrap;left:224px;transform:scaleX(0.875);transform-origin:0 50%;">527010.019.511126.01508WA.4719EAF.A000000001.00000.1.0151.2.000000.000000</div>
<div style="position:absolute;top:346.01px;font:normal 6.0px/1 'Liberation Sans',sans-serif;color:#666;white-space:nowrap;right:290.8px;transform:scaleX(0.862);transform-origin:100% 50%;">16.978.929.000,00</div>
<div style="position:absolute;top:346.01px;font:normal 6.0px/1 'Liberation Sans',sans-serif;color:#666;white-space:nowrap;right:212.8px;transform:scaleX(0.862);transform-origin:100% 50%;">8.019.166.400,00</div>
<div style="position:absolute;top:346.01px;font:normal 6.0px/1 'Liberation Sans',sans-serif;color:#666;white-space:nowrap;right:134.8px;transform:scaleX(0.862);transform-origin:100% 50%;">2.000.000,00</div>
<div style="position:absolute;left:836.6px;top:342.7px;width:55.4px;height:11.6px;background:#55b054;border-radius:1.5px;"></div>
<svg style="position:absolute;left:840.4px;top:345.84999999999997px;" width="5.5" height="5.5" viewBox="0 0 5 5" preserveAspectRatio="none"><circle cx="2" cy="2" r="1.35" fill="none" stroke="#fff" stroke-width="1.05"/><path d="M3 3L4.6 4.6" stroke="#fff" stroke-width="1.15" stroke-linecap="round"/></svg>
<div style="position:absolute;top:346.24px;font:bold 6.6px/1 'Liberation Sans',sans-serif;color:#fff;white-space:nowrap;left:849.5px;transform:scaleX(0.823);transform-origin:0 50%;">Lihat Detail</div>
<div style="position:absolute;left:221.5px;top:279px;width:1.0px;height:77.5px;background:#ececec;"></div>
<div style="position:absolute;left:572.0px;top:279px;width:1.0px;height:77.5px;background:#ececec;"></div>
<div style="position:absolute;left:650.0px;top:279px;width:1.0px;height:77.5px;background:#ececec;"></div>
<div style="position:absolute;left:727.5px;top:279px;width:1.0px;height:77.5px;background:#ececec;"></div>
<div style="position:absolute;left:805.5px;top:279px;width:1.0px;height:77.5px;background:#ececec;"></div>
<div style="position:absolute;left:144px;top:267.5px;width:778.5px;height:116.1px;border:1px solid #dedede;box-sizing:border-box;"></div>
<div style="position:absolute;left:472.5px;top:361.4px;width:94.0px;height:17.2px;background:#fff;border:1px solid #e4e6e9;border-radius:2px;box-sizing:border-box;"></div>
<div style="position:absolute;left:472.8px;top:361.7px;width:29.7px;height:16.6px;background:#ececee;border-radius:2px 0 0 2px;"></div>
<div style="position:absolute;left:502.5px;top:361.4px;width:17.0px;height:17.2px;background:#0b7bf7;"></div>
<div style="position:absolute;left:487.75px;top:361.6px;width:0.5px;height:16.8px;background:#e6e8eb;"></div>
<div style="position:absolute;left:534.75px;top:361.6px;width:0.5px;height:16.8px;background:#e6e8eb;"></div>
<div style="position:absolute;left:549.25px;top:361.6px;width:0.5px;height:16.8px;background:#e6e8eb;"></div>
<svg style="position:absolute;left:479.1px;top:368.59999999999997px;" width="3.6" height="3.2" viewBox="-0.8 0 3.6 3.2" preserveAspectRatio="none"><path d="M2 0L0 1.6L2 3.2Z" fill="#2f6fdb"/><rect x="-0.8" y="0" width="0.7" height="3.2" fill="#2f6fdb"/></svg>
<svg style="position:absolute;left:494.1px;top:368.59999999999997px;" width="3.6" height="3.2" viewBox="-0.8 0 3.6 3.2" preserveAspectRatio="none"><path d="M2 0L0 1.6L2 3.2Z" fill="#2f6fdb"/></svg>
<div style="position:absolute;top:367.74px;font:bold 6.6px/1 'Liberation Sans',sans-serif;color:#fff;white-space:nowrap;left:511px;transform:translateX(-50%) scaleX(0.87);transform-origin:50% 50%;">1</div>
<div style="position:absolute;top:367.74px;font:normal 6.6px/1 'Liberation Sans',sans-serif;color:#2f6fdb;white-space:nowrap;left:527.3px;transform:translateX(-50%) scaleX(0.87);transform-origin:50% 50%;">2</div>
<svg style="position:absolute;left:541.1px;top:368.59999999999997px;" width="3.6" height="3.2" viewBox="-0.8 0 3.6 3.2" preserveAspectRatio="none"><path d="M0 0L2 1.6L0 3.2Z" fill="#2f6fdb"/></svg>
<svg style="position:absolute;left:556.1px;top:368.59999999999997px;" width="3.6" height="3.2" viewBox="-0.8 0 3.6 3.2" preserveAspectRatio="none"><path d="M0 0L2 1.6L0 3.2Z" fill="#2f6fdb"/><rect x="2.1" y="0" width="0.7" height="3.2" fill="#2f6fdb"/></svg>
<div style="position:absolute;left:568.6px;top:363px;width:25.9px;height:14px;background:#fff;border:1px solid #dfe1e4;border-radius:1.5px;box-sizing:border-box;"></div>
<div style="position:absolute;top:367.53px;font:normal 6.8px/1 'Liberation Sans',sans-serif;color:#555;white-space:nowrap;left:573.4px;transform:scaleX(0.87);transform-origin:0 50%;">5</div>
<svg style="position:absolute;left:585px;top:368.5px;" width="6" height="3.8" viewBox="0 0 6 3.8" preserveAspectRatio="none"><path d="M0.7 0.8L3 3L5.3 0.8" fill="none" stroke="#3a3a3a" stroke-width="1.1"/></svg>
<div style="position:absolute;left:144px;top:393.5px;width:53.5px;height:12.0px;background:#0f7bf5;border-radius:1.5px;"></div>
<div style="position:absolute;top:397.14px;font:normal 6.6px/1 'Liberation Sans',sans-serif;color:#fff;white-space:nowrap;left:157.5px;transform:scaleX(0.87);transform-origin:0 50%;">RUH Akun</div>
<svg style="position:absolute;left:148.3px;top:397.05px;" width="4.9" height="4.9" viewBox="0 0 4.9 4.9" preserveAspectRatio="none"><circle cx="2.45" cy="2.45" r="2.3" fill="#fff"/><circle cx="2.45" cy="2.45" r="0.75" fill="#0f7bf5"/></svg>
<div style="position:absolute;left:139.7px;top:388.9px;width:63.0px;height:20.5px;border:1.7px solid #f0141e;box-sizing:border-box;"></div>
<svg style="position:absolute;left:190px;top:345px" width="34" height="60" viewBox="190 345 34 60"><path d="M199.5 349.8H215Q218 349.8 218 352.8V381.4Q218 384.4 215 384.4H207.6L197.6 400.2L201.4 384.4H199.5Q196.5 384.4 196.5 381.4V352.8Q196.5 349.8 199.5 349.8Z" fill="#6e9f3c" stroke="#4b7727" stroke-width="1.25" stroke-linejoin="round"/></svg>
<div style="position:absolute;top:363.95px;font:normal 12.5px/1 'Liberation Sans',sans-serif;color:#fff;white-space:nowrap;left:206.6px;transform:translateX(-50%) scaleX(0.95);transform-origin:50% 50%;">5</div>
<div style="position:absolute;top:397.13px;font:bold 6.8px/1 'Liberation Sans',sans-serif;color:#333;white-space:nowrap;right:100.7px;transform:scaleX(0.855);transform-origin:100% 50%;">Jumlah Pengeluaran</div>
<div style="position:absolute;left:842.5px;top:393.6px;width:80.0px;height:11.9px;background:#ececec;border:1px solid #dedede;border-radius:2.1px;box-sizing:border-box;"></div>
<div style="position:absolute;top:397.29px;font:normal 6.6px/1 'Liberation Sans',sans-serif;color:#737373;white-space:nowrap;right:21.0px;transform:scaleX(0.9);transform-origin:100% 50%;">49.782.222,00</div>
<div style="position:absolute;top:416.23px;font:bold 6.8px/1 'Liberation Sans',sans-serif;color:#333;white-space:nowrap;right:94.5px;transform:scaleX(0.84);transform-origin:100% 50%;">TOTAL PEMBAYARAN</div>
<div style="position:absolute;left:848.6px;top:412.5px;width:80.1px;height:12.0px;background:#ececec;border:1px solid #dedede;border-radius:2.1px;box-sizing:border-box;"></div>
<div style="position:absolute;top:416.24px;font:normal 6.6px/1 'Liberation Sans',sans-serif;color:#737373;white-space:nowrap;right:14.8px;transform:scaleX(0.9);transform-origin:100% 50%;">44.804.000,00</div>
<div style="position:absolute;left:133px;top:436px;width:53.5px;height:12px;background:#0f7bf5;border-radius:1.5px;"></div>
<div style="position:absolute;top:439.64px;font:normal 6.6px/1 'Liberation Sans',sans-serif;color:#fff;white-space:nowrap;left:145.8px;transform:scaleX(0.87);transform-origin:0 50%;">Rekap Gaji</div>
<svg style="position:absolute;left:136.6px;top:439.25px;" width="5.5" height="5.5" viewBox="0 0 5 5" preserveAspectRatio="none"><circle cx="2" cy="2" r="1.35" fill="none" stroke="#fff" stroke-width="1.05"/><path d="M3 3L4.6 4.6" stroke="#fff" stroke-width="1.15" stroke-linecap="round"/></svg>
<div style="position:absolute;left:799px;top:436px;width:45.5px;height:12px;background:#0f7bf5;border-radius:1.5px;"></div>
<div style="position:absolute;top:439.64px;font:normal 6.6px/1 'Liberation Sans',sans-serif;color:#fff;white-space:nowrap;left:812px;transform:scaleX(0.87);transform-origin:0 50%;">Simpan</div>
<svg style="position:absolute;left:803.6px;top:439.75px;" width="4.5" height="4.5" viewBox="0 0 4.5 4.5" preserveAspectRatio="none"><path d="M0.3 0.8Q0.3 0.3 0.8 0.3H3.3L4.2 1.2V3.7Q4.2 4.2 3.7 4.2H0.8Q0.3 4.2 0.3 3.7Z" fill="#fff"/><rect x="1" y="0.6" width="2" height="1" fill="#0f7bf5"/></svg>
<div style="position:absolute;left:848px;top:436px;width:38.5px;height:12px;background:#0f7bf5;border-radius:1.5px;"></div>
<div style="position:absolute;top:439.64px;font:normal 6.6px/1 'Liberation Sans',sans-serif;color:#fff;white-space:nowrap;left:861px;transform:scaleX(0.87);transform-origin:0 50%;">Batal</div>
<svg style="position:absolute;left:852.0999999999999px;top:439.55px;" width="4.9" height="4.9" viewBox="0 0 4.9 4.9" preserveAspectRatio="none"><circle cx="2.45" cy="2.45" r="2.3" fill="#fff"/><circle cx="2.45" cy="2.45" r="0.75" fill="#0f7bf5"/></svg>
<div style="position:absolute;left:891px;top:436px;width:42px;height:12px;background:#0f7bf5;border-radius:1.5px;"></div>
<div style="position:absolute;top:439.64px;font:normal 6.6px/1 'Liberation Sans',sans-serif;color:#fff;white-space:nowrap;left:903.7px;transform:scaleX(0.87);transform-origin:0 50%;">Keluar</div>
<svg style="position:absolute;left:894.6px;top:439.75px;" width="5" height="4.5" viewBox="0 0 5 4.5" preserveAspectRatio="none"><path d="M0.3 0.5H1.8V4H0.3Z" fill="#fff"/><path d="M2 1.5H3.2V0.6L4.9 2.25L3.2 3.9V3H2Z" fill="#fff"/></svg>
<div style="position:absolute;left:0px;top:0px;width:940px;height:27.5px;background:linear-gradient(90deg,#3a1d79 0%,#3c1f7d 45%,#45228d 100%);box-shadow:0 0.5px 2px rgba(30,10,80,.55);"></div>
<div style="position:absolute;left:0px;top:0px;width:117px;height:27.5px;background:linear-gradient(90deg,#43228b,#412189);"></div>
<svg style="position:absolute;left:6px;top:5px" width="17" height="16" viewBox="6 5 17 16"><defs><linearGradient id="lg1" x1="0" x2="1"><stop offset="0" stop-color="#b82a55"/><stop offset="0.55" stop-color="#cf7fa6"/><stop offset="1" stop-color="#e9d6f4"/></linearGradient></defs><path d="M8.7 10.5L10.2 8.7L16.7 6.9L16.5 8.6L13.6 10.9Z" fill="#e6e01e"/><path d="M12.4 10.9L15.8 10.4L16.2 11.9L12.8 12.1Z" fill="#3f80e2"/><path d="M7.1 14.3L10.2 12.3L17 12L21.2 13.8L16.2 15.5L13.6 17.2L10.6 15.9Z" fill="url(#lg1)"/><circle cx="13.4" cy="18.2" r="0.65" fill="#f4eef8"/></svg>
<div style="position:absolute;top:5.08px;font:bold 15.4px/1 'Liberation Sans',sans-serif;color:#20a0e4;white-space:nowrap;left:25.4px;transform:scaleX(0.985);transform-origin:0 50%;">sakti</div>
<div style="position:absolute;left:26px;top:19.3px;width:34px;height:0.6px;background:#2b2f73;opacity:.5;"></div>
<div style="position:absolute;left:109.3px;top:8.2px;width:12.0px;height:12.0px;background:#fff;border-radius:1.8px;"></div>
<svg style="position:absolute;left:112px;top:10.2px;" width="7" height="8" viewBox="0 0 7 8" preserveAspectRatio="none"><path d="M1.5 1.2L4.7 4.1L1.5 7" fill="none" stroke="#2b1a55" stroke-width="1.75"/></svg>
<div style="position:absolute;top:11.24px;font:bold 6.4px/1 'Liberation Sans',sans-serif;color:#fff;white-space:nowrap;left:129px;transform:scaleX(0.791);transform-origin:0 50%;">opr_527010_199503152016122001 - 2021 - KANTOR PUSAT DIREKTORAT JENDERAL PERBENDAHARAAN(527010) - 52701000 - OPERATOR - SATKER - 015080199527010000KP</div>
<svg style="position:absolute;left:906.5px;top:7.6px" width="12" height="13" viewBox="0 0 12 13"><path d="M6 0.6Q6.9 0.6 6.9 1.5Q9.6 2.3 9.6 5.6Q9.6 8.2 11 9.4V10.2H1V9.4Q2.4 8.2 2.4 5.6Q2.4 2.3 5.1 1.5Q5.1 0.6 6 0.6Z" fill="#fff"/><path d="M4.5 10.8H7.5Q7.5 12.3 6 12.3Q4.5 12.3 4.5 10.8Z" fill="#fff"/></svg>
<div style="position:absolute;left:915.6px;top:5.2px;width:5.1px;height:6.7px;background:#ea1616;border-radius:1.8px;"></div>
<div style="position:absolute;top:7.01px;font:bold 4.8px/1 'Liberation Sans',sans-serif;color:#ffd9d9;white-space:nowrap;left:918.1px;transform:translateX(-50%) scaleX(0.87);transform-origin:50% 50%;">1</div>
<svg style="position:absolute;left:928.5px;top:8.6px" width="12" height="11" viewBox="0 0 12 11"><path d="M4.6 1.2H2.4Q1.1 1.2 1.1 2.5V8.7Q1.1 10 2.4 10H4.6" fill="none" stroke="#fff" stroke-width="1.9"/><path d="M4.6 3.5H7.6V1L12.4 5.6L7.6 10.2V7.7H4.6Z" fill="#fff"/></svg>
</body></html>
